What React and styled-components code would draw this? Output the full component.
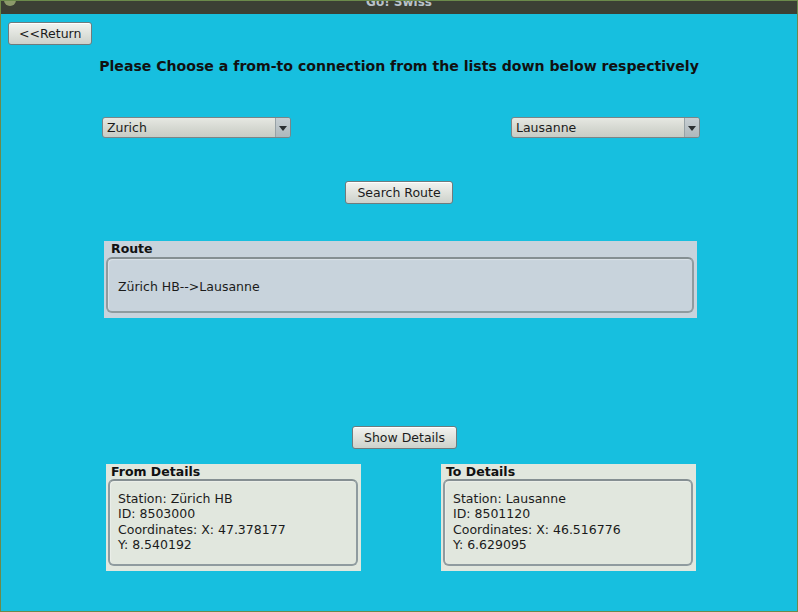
import { createGlobalStyle, styled } from "styled-components";

const GlobalStyle = createGlobalStyle`
  html, body {
    margin: 0;
    padding: 0;
    background: #17bfdf;
  }
  body {
    font-family: "DejaVu Sans", "Liberation Sans", sans-serif;
    font-size: 12.5px;
    color: #1b1b1b;
  }
`;

const Window = styled.div`
  width: 798px;
  height: 612px;
  box-sizing: border-box;
  border: 1px solid #6b8a4b;
  border-top: none;
  background: #17bfdf;
  display: flex;
  flex-direction: column;
  overflow: hidden;
`;

const TitleBar = styled.div`
  height: 13px;
  flex: none;
  background: #3c4035;
  border-top: 1px solid #6b8a4b;
  position: relative;
  overflow: hidden;
  display: flex;
  justify-content: center;
`;

const Title = styled.span`
  margin-top: -6px;
  font-weight: bold;
  font-size: 12px;
  color: #b9c2c9;
  line-height: 14px;
`;

const CloseDot = styled.span`
  position: absolute;
  left: 3px;
  top: -7px;
  width: 12px;
  height: 12px;
  border-radius: 50%;
  background: #8c9a6a;
`;

const Content = styled.div`
  flex: 1;
  display: flex;
  flex-direction: column;
  padding: 8px 0 0 7px;
`;

const Button = styled.button`
  font-family: "DejaVu Sans", "Liberation Sans", sans-serif;
  font-size: 12.5px;
  color: #1b1b1b;
  height: 23px;
  padding: 0 ${(p) => p.$pad || 11}px;
  border: 1px solid #6f7b7d;
  border-radius: 3px;
  background: linear-gradient(#f2f3f0, #dcdfd9 60%, #cdd1cb);
  box-shadow: inset 0 1px 0 #ffffff;
  cursor: pointer;
`;

const ReturnRow = styled.div`
  display: flex;
`;

const Heading = styled.h1`
  margin: 13px 0 0 -7px;
  font-size: 14.1px;
  font-weight: bold;
  text-align: center;
  color: #111;
  line-height: 17px;
`;

const ComboRow = styled.div`
  display: flex;
  justify-content: space-between;
  margin: 42px 0 0 0;
  padding: 0 97px 0 94px;
`;

const Combo = styled.div`
  width: 189px;
  height: 21px;
  box-sizing: border-box;
  border: 1px solid #7a8588;
  border-radius: 3px;
  background: linear-gradient(#e6e8e2, #d3d6cf 60%, #c8ccc5);
  display: flex;
  align-items: stretch;
  overflow: hidden;
`;

const ComboText = styled.span`
  flex: 1;
  padding-left: 4px;
  font-size: 12.5px;
  line-height: 19px;
`;

const ComboArrow = styled.span`
  width: 14px;
  border-left: 1px solid #97a2a6;
  background: linear-gradient(#c6ced2, #aeb8bc);
  display: flex;
  align-items: center;
  justify-content: center;
`;

const CenterRow = styled.div`
  display: flex;
  justify-content: center;
  margin: ${(p) => p.$top}px 0 0 ${(p) => p.$shift}px;
`;

const Panel = styled.section`
  box-sizing: border-box;
  width: ${(p) => p.$width}px;
  height: ${(p) => p.$height}px;
  background: ${(p) => p.$bg};
  padding: 1px 3px 5px 2px;
  display: flex;
  flex-direction: column;
`;

const PanelTitle = styled.h2`
  margin: 0 0 ${(p) => p.$gap}px ${(p) => p.$indent}px;
  font-size: 12.5px;
  font-weight: bold;
  line-height: 14px;
  color: #111;
`;

const PanelBody = styled.div`
  flex: 1;
  border: 2px solid #8f9b9f;
  border-top-color: #858f92;
  border-radius: 6px;
  box-shadow: inset 1px 1px 1px rgba(255, 255, 255, 0.35);
  padding: ${(p) => p.$pad};
  line-height: 15.3px;
  font-size: 12.5px;
`;

const RouteRow = styled.div`
  margin: 37px 0 0 96px;
`;

const DetailsRow = styled.div`
  display: flex;
  gap: 80px;
  margin: 15px 0 0 98px;
`;

const Line = styled.div``;

function Arrow() {
  return (
    <svg width="8" height="6" viewBox="0 0 8 6">
      <path d="M0 1 L8 1 L4 6 Z" fill="#2a2f31" />
    </svg>
  );
}

function Details({ title, station, id, x, y }) {
  return (
    <Panel $width={255} $height={107} $bg="#e1e7de">
      <PanelTitle $indent={3} $gap={0}>{title}</PanelTitle>
      <PanelBody $pad="10px 8px">
        <Line>Station: {station}</Line>
        <Line>ID: {id}</Line>
        <Line>Coordinates: X: {x}</Line>
        <Line>Y: {y}</Line>
      </PanelBody>
    </Panel>
  );
}

export default function App() {
  return (
    <>
      <GlobalStyle />
      <Window>
        <TitleBar>
          <CloseDot />
          <Title>Go! Swiss</Title>
        </TitleBar>
        <Content>
          <ReturnRow>
            <Button $pad={10}>&lt;&lt;Return</Button>
          </ReturnRow>
          <Heading>Please Choose a from-to connection from the lists down below respectively</Heading>
          <ComboRow>
            <Combo>
              <ComboText>Zurich</ComboText>
              <ComboArrow>
                <Arrow />
              </ComboArrow>
            </Combo>
            <Combo>
              <ComboText>Lausanne</ComboText>
              <ComboArrow>
                <Arrow />
              </ComboArrow>
            </Combo>
          </ComboRow>
          <CenterRow $top={43} $shift={-7}>
            <Button>Search Route</Button>
          </CenterRow>
          <RouteRow>
            <Panel $width={593} $height={77} $bg="#c8d3dc">
              <PanelTitle $indent={5} $gap={1}>Route</PanelTitle>
              <PanelBody $pad="20px 10px 16px">Zürich HB--&gt;Lausanne</PanelBody>
            </Panel>
          </RouteRow>
          <CenterRow $top={108} $shift={4}>
            <Button>Show Details</Button>
          </CenterRow>
          <DetailsRow>
            <Details title="From Details" station="Zürich HB" id="8503000" x="47.378177" y="8.540192" />
            <Details title="To Details" station="Lausanne" id="8501120" x="46.516776" y="6.629095" />
          </DetailsRow>
        </Content>
      </Window>
    </>
  );
}
